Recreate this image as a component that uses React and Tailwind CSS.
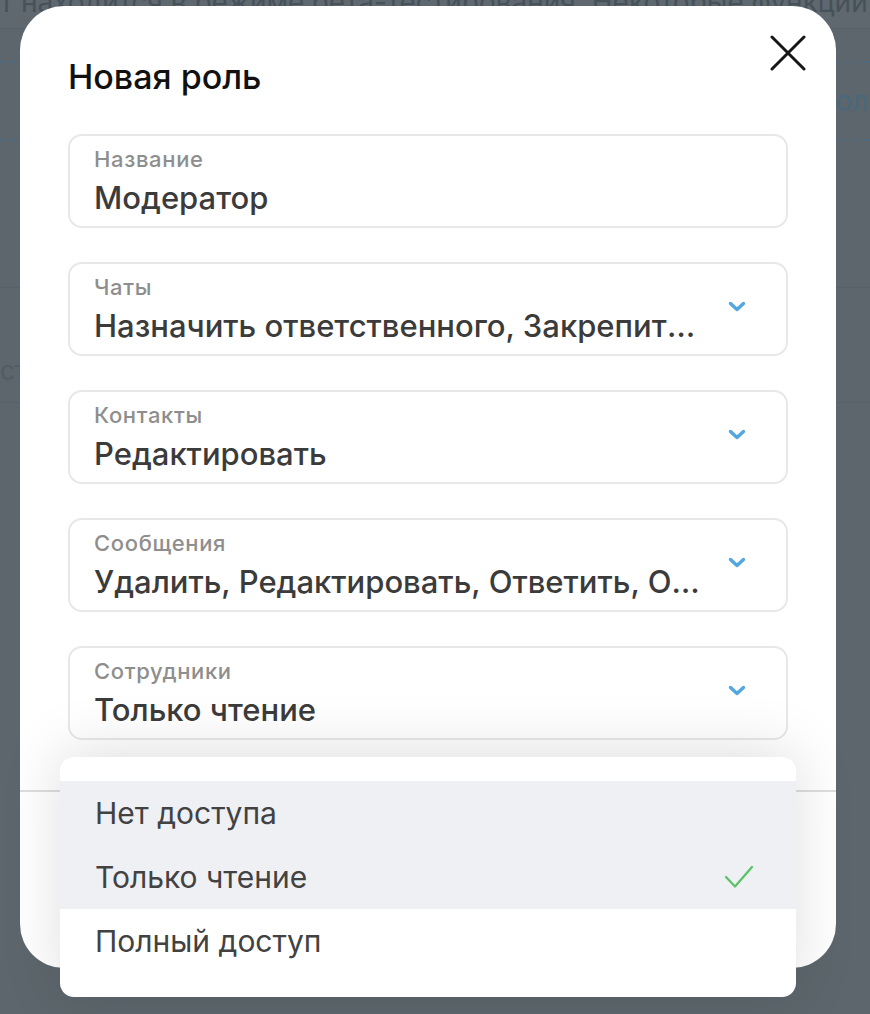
import React from 'react';

const fields = [
  { label: 'Название', value: 'Модератор', select: false },
  { label: 'Чаты', value: 'Назначить ответственного, Закрепить, Архивировать', select: true },
  { label: 'Контакты', value: 'Редактировать', select: true },
  { label: 'Сообщения', value: 'Удалить, Редактировать, Ответить, Отметить', select: true },
  { label: 'Сотрудники', value: 'Только чтение', select: true },
];

const options = [
  { text: 'Нет доступа', hover: true, checked: false },
  { text: 'Только чтение', hover: true, checked: true },
  { text: 'Полный доступ', hover: false, checked: false },
];

const Chevron = () => (
  <svg width="18" height="12" viewBox="0 0 18 12" fill="none" className="shrink-0">
    <path d="M2.5 2.5 L9 8.5 L15.5 2.5" stroke="#53a6de" strokeWidth="3.4" strokeLinecap="round" strokeLinejoin="round" />
  </svg>
);

const Field = ({ label, value, select }) => (
  <div className="flex items-center h-[94px] rounded-[14px] border-2 border-[#e8e8e8] bg-white pl-[24px] pr-[40px]">
    <div className="flex-1 min-w-0 flex flex-col gap-[9px]">
      <span className="text-[22px] leading-[24px] font-medium tracking-[0.03em] text-[#8e8e8e]">{label}</span>
      <span className={`text-[31px] leading-[36px] font-medium text-[#3b3b3b] truncate ${select ? 'pr-[20px]' : ''}`}>{value}</span>
    </div>
    {select && <div className="-mt-[4px]"><Chevron /></div>}
  </div>
);

export default function App() {
  return (
    <div className="relative w-[870px] h-[1014px] overflow-hidden bg-[#5c666c] font-[Inter,'Noto_Sans',sans-serif]">
      {/* dimmed page behind the dialog */}
      <div className="h-[29px] bg-[#5e686e] border-b border-[#576167] overflow-hidden">
        <p className="-mt-[16px] whitespace-nowrap text-[28px] leading-[36px] text-[#47515a]">
          т находится в режиме бета-тестирования. Некоторые функции могут работать нестабильно
        </p>
      </div>
      <div className="mt-[32px] h-[80px] border-y-2 border-dashed border-[#4f6a7e] flex items-center justify-end overflow-hidden">
        <span className="-mr-[14px] whitespace-nowrap text-[28px] text-[#4a687d]">Добавить роль</span>
      </div>
      <div className="mt-[146px] h-[116px] border-y border-[#57616a] flex items-center overflow-hidden">
        <span className="-ml-[30px] mt-[50px] text-[26px] text-[#525c63]">Тестировщик</span>
      </div>

      {/* dialog */}
      <div className="absolute left-[20px] top-[6px] w-[816px] h-[962px] bg-white rounded-[44px] flex flex-col">
        <button className="absolute right-[30px] top-[29px] w-[36px] h-[36px] flex items-center justify-center">
          <svg width="36" height="36" viewBox="0 0 36 36" fill="none">
            <path d="M2 2 L34 34 M34 2 L2 34" stroke="#161616" strokeWidth="3" strokeLinecap="round" />
          </svg>
        </button>
        <div className="px-[48px] pt-[51px]">
          <h2 className="text-[34px] leading-[40px] font-medium text-[#111]">Новая роль</h2>
          <div className="mt-[37px] flex flex-col gap-[34px]">
            {fields.map((f) => (
              <Field key={f.label} {...f} />
            ))}
          </div>
        </div>
        <div className="mt-[50px] border-t-2 border-[#dedede] flex-1" />
      </div>

      {/* open select menu */}
      <div className="absolute left-[60px] top-[757px] w-[736px] bg-white rounded-[14px] py-[24px] shadow-[0_-6px_60px_rgba(0,0,0,0.13)]">
        {options.map((o) => (
          <div
            key={o.text}
            className={`h-[64px] flex items-center justify-between pl-[35px] pr-[42px] ${o.hover ? 'bg-[#eff0f4]' : ''}`}
          >
            <span className="text-[30px] text-[#424242]">{o.text}</span>
            {o.checked && (
              <svg width="30" height="24" viewBox="0 0 30 24" fill="none">
                <path d="M2 12 L11 21.5 L28 2" stroke="#58c264" strokeWidth="2.2" strokeLinecap="round" strokeLinejoin="round" />
              </svg>
            )}
          </div>
        ))}
      </div>
    </div>
  );
}
